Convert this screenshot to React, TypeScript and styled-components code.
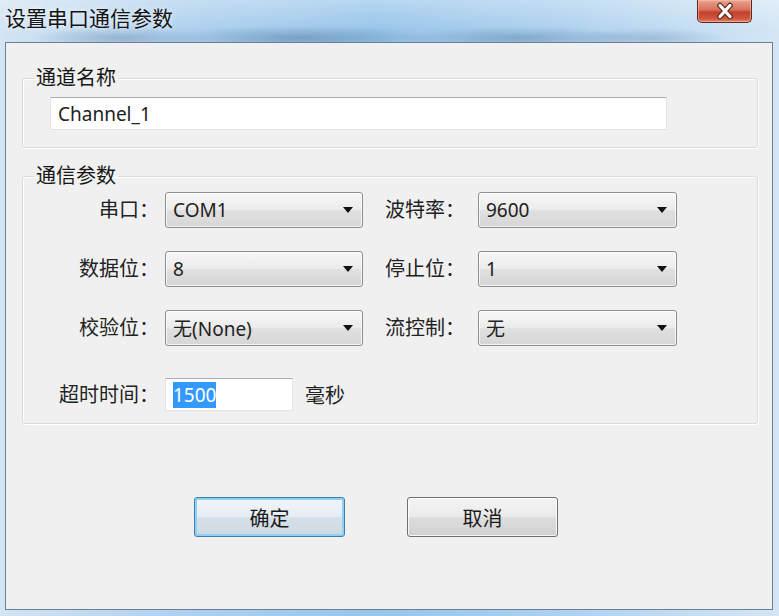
import { Fragment } from 'react'
import styled, { createGlobalStyle } from 'styled-components'

const GlobalStyle = createGlobalStyle`
  html, body {
    margin: 0;
    padding: 0;
    overflow: hidden;
    background: #bcd4ea;
  }
  body {
    font-family: "Noto Sans", "Noto Sans CJK SC", sans-serif;
  }
`

const cjk = `"Noto Sans", "Noto Sans CJK SC", sans-serif`

const Window = styled.div`
  width: 779px;
  height: 616px;
  display: flex;
  flex-direction: column;
  box-sizing: border-box;
  padding: 0 6px 6px 5px;
  background:
    linear-gradient(180deg, rgba(255, 255, 255, 0.3) 0px, rgba(255, 255, 255, 0) 30px),
    radial-gradient(ellipse 140px 12px at 300px 38px, rgba(60, 100, 140, 0.4), rgba(60, 100, 140, 0)),
    radial-gradient(ellipse 120px 11px at 520px 38px, rgba(60, 100, 140, 0.35), rgba(60, 100, 140, 0)),
    radial-gradient(ellipse 90px 11px at 120px 38px, rgba(60, 100, 140, 0.3), rgba(60, 100, 140, 0)),
    radial-gradient(ellipse 80px 10px at 650px 38px, rgba(60, 100, 140, 0.25), rgba(60, 100, 140, 0)),
    linear-gradient(90deg, #d3e4f3 0%, #b0d1ee 22%, #98c5ea 48%, #add0ee 72%, #d4e6f5 100%);
`

const TitleBar = styled.div`
  height: 42px;
  display: flex;
  align-items: flex-start;
  flex-shrink: 0;
`

const Title = styled.div`
  padding: 6px 0 0 0;
  font-family: ${cjk};
  font-size: 21px;
  line-height: 24px;
  color: #141414;
  text-shadow: 0 0 6px rgba(255, 255, 255, 0.9);
`

const CloseButton = styled.div`
  margin-left: auto;
  margin-right: 21px;
  width: 55px;
  height: 23px;
  box-sizing: border-box;
  border: 1px solid #5c2a25;
  border-top: none;
  border-radius: 0 0 5px 5px;
  background: linear-gradient(180deg, #e9a593 0%, #d8705a 45%, #c2402b 55%, #d0573f 85%, #e08a6f 100%);
  box-shadow: inset 0 0 0 1px rgba(255, 200, 180, 0.5);
  display: flex;
  align-items: center;
  justify-content: center;
`

const Client = styled.div`
  flex: 1;
  display: flex;
  flex-direction: column;
  background: #f0f0f0;
  border: 1px solid #6b7f94;
  padding: 0 14px 0 16px;
`

const Group = styled.fieldset<{ $top: number }>`
  margin: ${(p) => p.$top}px 0 0 0;
  padding: 0;
  min-inline-size: 0;
  border: 1px solid #d6dbe0;
  border-radius: 3px;
  box-shadow: inset 1px 1px 0 #ffffff, 1px 1px 0 #ffffff;
`

const Legend = styled.legend`
  margin-left: 11px;
  padding: 0 2px;
  font-family: ${cjk};
  font-size: 20px;
  line-height: 24px;
  color: #161616;
`

const NameBody = styled.div`
  padding: 7px 90px 17px 27px;
`

const TextInput = styled.div<{ $width?: number }>`
  height: 33px;
  width: ${(p) => (p.$width ? `${p.$width}px` : 'auto')};
  box-sizing: border-box;
  background: #ffffff;
  border: 1px solid #e2e3ea;
  border-top-color: #abadb3;
  display: flex;
  align-items: center;
  padding-left: 7px;
  font-family: ${cjk};
  font-size: 19px;
  color: #222;
`

const ParamBody = styled.div`
  padding: 4px 0 12px 0;
`

const ParamGrid = styled.div`
  display: grid;
  grid-template-columns: 142px 198px 115px 199px;
  grid-auto-rows: 36px;
  row-gap: 23px;
  align-items: center;
`

const Label = styled.div<{ $align?: 'left' | 'right' }>`
  font-family: ${cjk};
  font-size: 20px;
  line-height: 24px;
  color: #222;
  white-space: nowrap;
  text-align: ${(p) => p.$align ?? 'right'};
  padding: ${(p) => (p.$align === 'left' ? '0 0 0 22px' : '0 6px 0 0')};
`

const Combo = styled.div`
  height: 36px;
  box-sizing: border-box;
  border: 1px solid #8e8f8f;
  border-radius: 3px;
  background: linear-gradient(180deg, #f6f6f6 0%, #ececec 48%, #e0e0e0 52%, #d6d6d6 100%);
  box-shadow: inset 0 0 0 1px rgba(255, 255, 255, 0.7);
  display: flex;
  align-items: center;
  padding: 0 9px 0 7px;
  font-family: ${cjk};
  font-size: 19px;
  color: #222;
`

const ComboText = styled.span`
  flex: 1;
`

const Arrow = styled.span`
  width: 0;
  height: 0;
  border-left: 5px solid transparent;
  border-right: 5px solid transparent;
  border-top: 6px solid #111;
`

const TimeoutRow = styled.div`
  margin-top: 32px;
  display: grid;
  grid-template-columns: 142px 128px auto;
  align-items: center;
`

const Selected = styled.span`
  background: #3399ff;
  color: #ffffff;
  line-height: 26px;
`

const Unit = styled.span`
  padding-left: 12px;
  font-family: ${cjk};
  font-size: 20px;
  color: #222;
`

const ButtonRow = styled.div`
  margin-top: 73px;
  padding-left: 172px;
  display: flex;
  gap: 62px;
`

const Button = styled.div<{ $primary?: boolean }>`
  width: 151px;
  height: 40px;
  box-sizing: border-box;
  border: 1px solid ${(p) => (p.$primary ? '#3c7fb1' : '#707070')};
  border-radius: 3px;
  background: ${(p) =>
    p.$primary
      ? 'linear-gradient(180deg, #f0f5f9 0%, #e6edf3 48%, #d6e0e8 52%, #cdd8e2 100%)'
      : 'linear-gradient(180deg, #f4f4f4 0%, #ebebeb 48%, #dddddd 52%, #d1d1d1 100%)'};
  box-shadow: ${(p) =>
    p.$primary ? 'inset 0 0 0 2px #8fd0f3' : 'inset 0 0 0 1px rgba(255,255,255,0.8)'};
  display: flex;
  align-items: center;
  justify-content: center;
  font-family: ${cjk};
  font-size: 20px;
  color: #1a1a1a;
`

const params: [string, string, string, string][] = [
  ['串口：', 'COM1', '波特率：', '9600'],
  ['数据位：', '8', '停止位：', '1'],
  ['校验位：', '无(None)', '流控制：', '无'],
]

const CloseIcon = () => (
  <svg width="20" height="18" viewBox="0 0 20 18">
    <path d="M5 3.5 L15 14.5 M15 3.5 L5 14.5" stroke="#5a2a20" strokeWidth="5.5" strokeLinecap="round" />
    <path d="M5 3.5 L15 14.5 M15 3.5 L5 14.5" stroke="#ffffff" strokeWidth="3.2" strokeLinecap="round" />
  </svg>
)

const App = () => {
  return (
    <>
      <GlobalStyle />
      <Window>
        <TitleBar>
          <Title>设置串口通信参数</Title>
          <CloseButton>
            <CloseIcon />
          </CloseButton>
        </TitleBar>
        <Client>
          <Group $top={23}>
            <Legend>通道名称</Legend>
            <NameBody>
              <TextInput>Channel_1</TextInput>
            </NameBody>
          </Group>
          <Group $top={16}>
            <Legend>通信参数</Legend>
            <ParamBody>
              <ParamGrid>
                {params.map(([l1, v1, l2, v2]) => (
                  <Fragment key={l1}>
                    <Label>{l1}</Label>
                    <Combo>
                      <ComboText>{v1}</ComboText>
                      <Arrow />
                    </Combo>
                    <Label $align="left">{l2}</Label>
                    <Combo>
                      <ComboText>{v2}</ComboText>
                      <Arrow />
                    </Combo>
                  </Fragment>
                ))}
              </ParamGrid>
              <TimeoutRow>
                <Label>超时时间：</Label>
                <TextInput $width={128}>
                  <Selected>1500</Selected>
                </TextInput>
                <Unit>毫秒</Unit>
              </TimeoutRow>
            </ParamBody>
          </Group>
          <ButtonRow>
            <Button $primary>确定</Button>
            <Button>取消</Button>
          </ButtonRow>
        </Client>
      </Window>
    </>
  )
}

export default App
